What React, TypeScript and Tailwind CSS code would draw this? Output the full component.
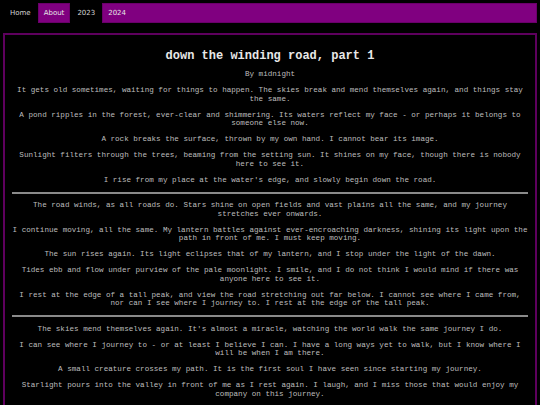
const SECTIONS: string[][] = [
  [
    "It gets old sometimes, waiting for things to happen. The skies break and mend themselves again, and things stay the same.",
    "A pond ripples in the forest, ever-clear and shimmering. Its waters reflect my face - or perhaps it belongs to someone else now.",
    "A rock breaks the surface, thrown by my own hand. I cannot bear its image.",
    "Sunlight filters through the trees, beaming from the setting sun. It shines on my face, though there is nobody here to see it.",
    "I rise from my place at the water's edge, and slowly begin down the road.",
  ],
  [
    "The road winds, as all roads do. Stars shine on open fields and vast plains all the same, and my journey stretches ever onwards.",
    "I continue moving, all the same. My lantern battles against ever-encroaching darkness, shining its light upon the path in front of me. I must keep moving.",
    "The sun rises again. Its light eclipses that of my lantern, and I stop under the light of the dawn.",
    "Tides ebb and flow under purview of the pale moonlight. I smile, and I do not think I would mind if there was anyone here to see it.",
    "I rest at the edge of a tall peak, and view the road stretching out far below. I cannot see where I came from, nor can I see where I journey to. I rest at the edge of the tall peak.",
  ],
  [
    "The skies mend themselves again. It's almost a miracle, watching the world walk the same journey I do.",
    "I can see where I journey to - or at least I believe I can. I have a long ways yet to walk, but I know where I will be when I am there.",
    "A small creature crosses my path. It is the first soul I have seen since starting my journey.",
    "Starlight pours into the valley in front of me as I rest again. I laugh, and I miss those that would enjoy my company on this journey.",
  ],
];

function NavItem({ label, active, grow }: { label: string; active?: boolean; grow?: boolean }) {
  return (
    <a
      href="#"
      className={
        active
          ? `flex items-center bg-[#800080] px-[6px] text-[#e6e6e6] shadow-[inset_0_0_0_1px_#6a006a] ${grow ? "flex-1" : ""}`
          : "flex items-center px-[7px] text-[#d4d4d4]"
      }
    >
      {label}
    </a>
  );
}

export default function App() {
  return (
    <div className="min-h-[405px] bg-black p-[3px] text-[#bdbdbd]">
      <nav className="flex h-[20px] font-['DejaVu_Sans',sans-serif] text-[7px]">
        <NavItem label="Home" />
        <NavItem label="About" active />
        <NavItem label="2023" />
        <NavItem label="2024" active grow />
      </nav>

      <main className="mt-[10px] border-2 border-[#5e005e] px-[7px] pt-[14px] pb-[10px] text-center font-['Liberation_Mono',monospace] text-[7.6px] leading-[8.5px]">
        <h1 className="text-[12px] leading-[14px] font-bold text-[#e8e8e8]">
          down the winding road, part 1
        </h1>
        <p className="mt-[7px] mb-[7.5px]">By midnight</p>
        {SECTIONS.map((section, i) => (
          <div key={i}>
            {i > 0 && <hr className="my-[7px] border-t-2 border-[#8a8a8a]" />}
            {section.map((text, j) => (
              <p key={j} className="my-[7.5px]">
                {text}
              </p>
            ))}
          </div>
        ))}
      </main>
    </div>
  );
}
